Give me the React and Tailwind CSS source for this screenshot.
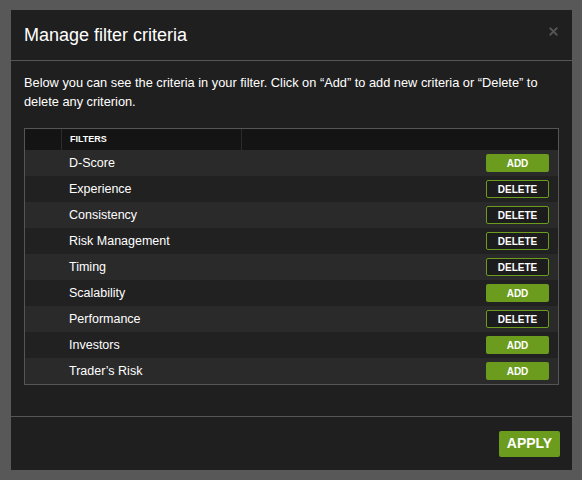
import { X } from "lucide-react";

const criteria = [
  { name: "D-Score", action: "add" },
  { name: "Experience", action: "delete" },
  { name: "Consistency", action: "delete" },
  { name: "Risk Management", action: "delete" },
  { name: "Timing", action: "delete" },
  { name: "Scalability", action: "add" },
  { name: "Performance", action: "delete" },
  { name: "Investors", action: "add" },
  { name: "Trader’s Risk", action: "add" },
];

function RowButton({ action }) {
  if (action === "add") {
    return (
      <button className="flex h-[18px] w-[63px] items-center justify-center rounded-[2px] bg-[#6b9c1e] text-[10px] font-bold text-white">
        ADD
      </button>
    );
  }
  return (
    <button className="flex h-[18px] w-[63px] items-center justify-center rounded-[2px] border border-[#6b9c1e] bg-[#1c1c1c] text-[10px] font-bold text-white">
      DELETE
    </button>
  );
}

export default function App() {
  return (
    <div
      className="h-[480px] w-[582px] bg-[#585858] pl-[11px] pt-[10px]"
      style={{ fontFamily: '"Liberation Sans", Arial, sans-serif' }}
    >
      <div className="flex h-[460px] w-[561px] flex-col bg-[#1f1f1f] text-white">
        <div className="flex h-[51px] items-center justify-between border-b border-[#555] pl-[13px] pr-[12px]">
          <h2 className="text-[18px] leading-none">Manage filter criteria</h2>
          <X size={13} strokeWidth={3.5} className="mb-[8px] text-[#555]" />
        </div>

        <div className="flex-1 border-b border-[#555] px-[13px] pt-[12px]">
          <p className="text-[12.8px] leading-[19px]">
            Below you can see the criteria in your filter. Click on “Add” to add new criteria or “Delete” to delete any
            criterion.
          </p>

          <div className="mt-[17px] border border-[#555]">
            <div className="flex h-[21px] bg-[#141414] text-[9px] font-bold">
              <div className="w-[37px] border-r border-[#2c2c2c]" />
              <div className="flex w-[180px] items-center border-r border-[#2c2c2c] pl-[8px]">FILTERS</div>
              <div className="flex-1" />
            </div>
            {criteria.map((item, i) => (
              <div
                key={item.name}
                className={`flex h-[26px] items-center pr-[9px] ${i % 2 === 0 ? "bg-[#2a2a2a]" : "bg-[#212121]"}`}
              >
                <span className="flex-1 pl-[44px] text-[12.5px]">{item.name}</span>
                <RowButton action={item.action} />
              </div>
            ))}
          </div>
        </div>

        <div className="flex h-[53px] items-center justify-end pr-[12px]">
          <button className="flex h-[26px] w-[61px] items-center justify-center rounded-[2px] bg-[#6b9c1e] text-[14px] font-bold text-white">
            APPLY
          </button>
        </div>
      </div>
    </div>
  );
}
